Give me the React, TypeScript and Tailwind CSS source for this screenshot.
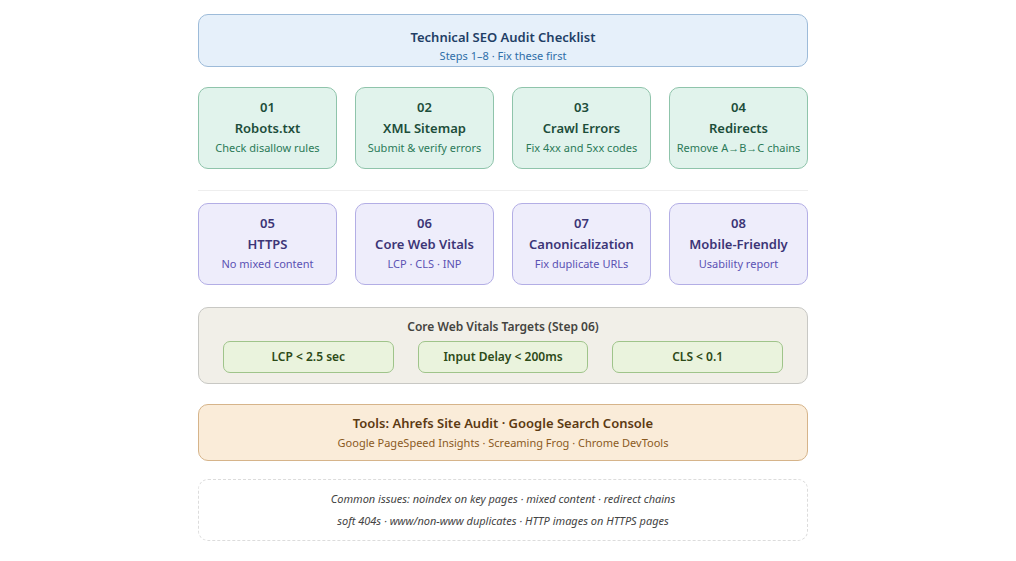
export default function App() {
  const row1 = [
    ["01", "Robots.txt", "Check disallow rules"],
    ["02", "XML Sitemap", "Submit & verify errors"],
    ["03", "Crawl Errors", "Fix 4xx and 5xx codes"],
    ["04", "Redirects", "Remove A→B→C chains"],
  ]
  const row2 = [
    ["05", "HTTPS", "No mixed content"],
    ["06", "Core Web Vitals", "LCP · CLS · INP"],
    ["07", "Canonicalization", "Fix duplicate URLs"],
    ["08", "Mobile-Friendly", "Usability report"],
  ]
  return (
    <div className="min-h-screen bg-white" style={{ fontFamily: '"Noto Sans", "Open Sans", sans-serif' }}>
      <div className="w-[610px] ml-[198px] pt-[14px] flex flex-col">
        <div className="h-[53px] rounded-[10px] border border-[#9dbbd9] bg-[#e6f0fa] flex flex-col items-center pt-[12px]">
          <div className="text-[13px] font-semibold text-[#1f3f66] leading-[20px]">Technical SEO Audit Checklist</div>
          <div className="text-[11px] text-[#2f6ea8] leading-[18px]">Steps 1–8 · Fix these first</div>
        </div>
        <div className="grid grid-cols-4 gap-[18px] mt-[20px]">
          {row1.map(([n, t, s]) => (
            <div key={n} className="h-[82px] rounded-[10px] border border-[#8fc4ab] bg-[#e1f3ec] flex flex-col items-center pt-[9px]">
              <div className="text-[13px] font-semibold text-[#1c4d3a] leading-[20px]">{n}</div>
              <div className="text-[13px] font-semibold text-[#1c4d3a] leading-[22px]">{t}</div>
              <div className="text-[11px] text-[#2b7a58] leading-[17px]">{s}</div>
            </div>
          ))}
        </div>
        <div className="h-px bg-[#eeeeee] mt-[21px]" />
        <div className="grid grid-cols-4 gap-[18px] mt-[12px]">
          {row2.map(([n, t, s]) => (
            <div key={n} className="h-[82px] rounded-[10px] border border-[#b3aee5] bg-[#eeedfb] flex flex-col items-center pt-[9px]">
              <div className="text-[13px] font-semibold text-[#3c3576] leading-[20px]">{n}</div>
              <div className="text-[13px] font-semibold text-[#3c3576] leading-[22px]">{t}</div>
              <div className="text-[11px] text-[#5b52b3] leading-[17px]">{s}</div>
            </div>
          ))}
        </div>
        <div className="mt-[22px] h-[77px] rounded-[10px] border border-[#c8c8c4] bg-[#f1efe8] flex flex-col items-center pt-[10px] px-[24px]">
          <div className="text-[12px] font-semibold text-[#444440] leading-[18px]">Core Web Vitals Targets (Step 06)</div>
          <div className="grid grid-cols-3 gap-[24px] w-full mt-[5px]">
            {["LCP < 2.5 sec", "Input Delay < 200ms", "CLS < 0.1"].map((t) => (
              <div key={t} className="h-[32px] rounded-[7px] border border-[#9fc48a] bg-[#eaf3dd] flex items-center justify-center text-[12px] font-semibold text-[#2d4a17]">{t}</div>
            ))}
          </div>
        </div>
        <div className="mt-[20px] h-[57px] rounded-[10px] border border-[#d6b48a] bg-[#faecd9] flex flex-col items-center justify-center">
          <div className="text-[13px] font-semibold text-[#5c3a12] leading-[20px]">Tools: Ahrefs Site Audit · Google Search Console</div>
          <div className="text-[11px] text-[#8a5a1e] leading-[20px]">Google PageSpeed Insights · Screaming Frog · Chrome DevTools</div>
        </div>
        <div className="mt-[18px] h-[62px] rounded-[10px] border border-dashed border-[#dcdcdc] flex flex-col items-center justify-center">
          <div className="text-[11px] italic text-[#444444] leading-[22px]">Common issues: noindex on key pages · mixed content · redirect chains</div>
          <div className="text-[11px] italic text-[#444444] leading-[22px]">soft 404s · www/non-www duplicates · HTTP images on HTTPS pages</div>
        </div>
      </div>
    </div>
  )
}
